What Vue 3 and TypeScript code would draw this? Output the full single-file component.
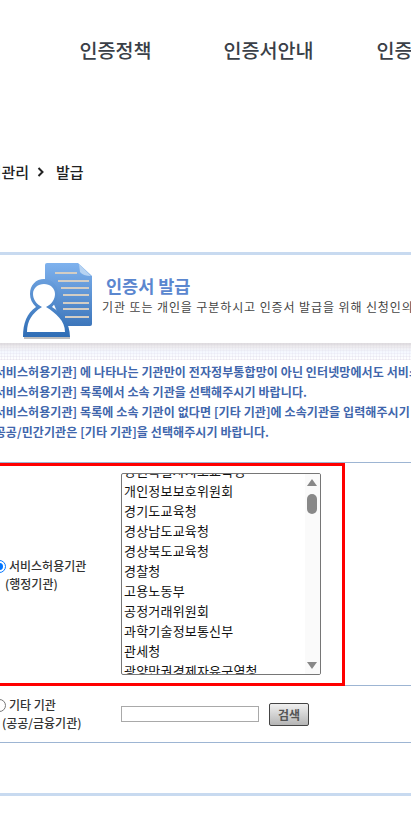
<script setup lang="ts">
const notices = [
  '[서비스허용기관] 에 나타나는 기관만이 전자정부통합망이 아닌 인터넷망에서도 서비스를 이용할 수 있습니다.',
  '[서비스허용기관] 목록에서 소속 기관을 선택해주시기 바랍니다.',
  '[서비스허용기관] 목록에 소속 기관이 없다면 [기타 기관]에 소속기관을 입력해주시기 바랍니다.',
  '(공공/민간기관은 [기타 기관]을 선택해주시기 바랍니다.',
]

const orgs = [
  '강원특별자치도교육청',
  '개인정보보호위원회',
  '경기도교육청',
  '경상남도교육청',
  '경상북도교육청',
  '경찰청',
  '고용노동부',
  '공정거래위원회',
  '과학기술정보통신부',
  '관세청',
  '광양만권경제자유구역청',
]
</script>

<template>
  <div class="page">
    <nav class="gnb">
      <span>인증정책</span>
      <span>인증서안내</span>
      <span>인증서관리</span>
    </nav>

    <div class="crumb">
      <span>인증서관리</span>
      <svg class="chev" width="8" height="10" viewBox="0 0 8 10">
        <path d="M1.5 1 L5.5 5 L1.5 9" fill="none" stroke="#222" stroke-width="2" />
      </svg>
      <span class="crumb-last">발급</span>
    </div>

    <div class="bar"></div>

    <header class="head">
      <svg class="head-icon" width="70" height="77" viewBox="0 0 70 77">
        <defs>
          <linearGradient id="doc" x1="0" y1="0" x2="0" y2="1">
            <stop offset="0" stop-color="#7fb2ee" />
            <stop offset="1" stop-color="#3d76bb" />
          </linearGradient>
          <linearGradient id="man" x1="0" y1="0" x2="0" y2="1">
            <stop offset="0" stop-color="#6a9fdd" />
            <stop offset="1" stop-color="#2f6db5" />
          </linearGradient>
        </defs>
        <path d="M22 2 Q22 0 24 0 H55 L69 13 V61 Q69 63 67 63 H40 L22 20 Z" fill="url(#doc)" />
        <path d="M56 1 L68 13 Q60 13 57 9 Z" fill="#b7d3f2" />
        <g fill="#d3cdc4">
          <rect x="32" y="9" width="22" height="2" />
          <rect x="35" y="17" width="31" height="2" />
          <rect x="38" y="24" width="28" height="2" />
          <rect x="40" y="31" width="26" height="2" />
          <rect x="40" y="39" width="26" height="2" />
          <rect x="40" y="45" width="26" height="2" />
          <rect x="42" y="53" width="24" height="2" />
        </g>
        <path
          d="M0 74 C0 60 4 50 13 44 C9 40 7 36 7 31 C7 22 13 16 21 16 C29 16 35 22 35 31 C35 36 33 40 29 44 C39 50 47 60 47 74 Z"
          fill="url(#man)"
        />
        <path
          d="M4 69 C4 58 9 50 19 44 C13 41 10 36 10 31 C10 25 15 21 21 21 C27 21 32 25 32 31 C32 36 29 41 23 44 C33 50 42 58 42 69 Z"
          fill="#fff"
        />
        <rect x="1" y="74" width="46" height="2" fill="#bdbdbd" />
      </svg>
      <div class="head-text">
        <h2>인증서 발급</h2>
        <p>기관 또는 개인을 구분하시고 인증서 발급을 위해 신청인의 정보를 입력해주시기 바랍니다.</p>
      </div>
    </header>

    <div class="band"></div>

    <ul class="notice">
      <li v-for="line in notices" :key="line">{{ line }}</li>
    </ul>

    <section class="form">
      <div class="row-wrap">
        <div class="row-main">
          <label class="choice">
            <span class="radio on"></span>
            <span class="choice-name">서비스허용기관</span>
            <span class="choice-sub">(행정기관)</span>
          </label>
          <div class="listbox">
            <ul class="items">
              <li v-for="org in orgs" :key="org">{{ org }}</li>
            </ul>
            <div class="scroll">
              <i class="arrow up"></i>
              <i class="thumb"></i>
              <i class="arrow down"></i>
            </div>
          </div>
        </div>
      </div>
      <div class="row-other">
        <label class="choice">
          <span class="radio"></span>
          <span class="choice-name">기타 기관</span>
          <span class="choice-sub">(공공/금융기관)</span>
        </label>
        <input class="org-input" type="text" />
        <button class="search" type="button">검색</button>
      </div>
    </section>

    <div class="bar bottom"></div>
  </div>
</template>

<style scoped>
.page {
  width: 411px;
  height: 824px;
  overflow: hidden;
  background: #fff;
  font-family: "Noto Sans CJK KR", "Noto Sans", sans-serif;
  color: #333;
}
.gnb {
  display: flex;
  padding: 36px 0 0 39px;
  height: 64px;
  font-size: 19.6px;
  line-height: 28px;
  font-weight: 500;
  color: #3a3f47;
  white-space: nowrap;
}
.gnb span {
  flex: none;
  width: 153px;
  text-align: center;
}
.crumb {
  display: flex;
  align-items: center;
  margin: 57px 0 0 -40px;
  height: 28px;
  font-size: 15px;
  font-weight: 500;
  color: #222;
  white-space: nowrap;
}
.chev {
  margin: 2px 0 0 8px;
}
.crumb-last {
  margin-left: 11px;
}
.bar {
  height: 3px;
  margin-top: 67px;
  background: #c8daf0;
}
.head {
  display: flex;
  height: 88px;
  padding-left: 23px;
}
.head-icon {
  flex: none;
  margin-top: 8px;
}
.head-text {
  margin-left: 9px;
  white-space: nowrap;
}
.head-text h2 {
  margin: 19px 0 0 4px;
  font-size: 17.5px;
  line-height: 24px;
  font-weight: 700;
  color: #5b87cf;
}
.head-text p {
  margin: 0;
  font-size: 12px;
  line-height: 18px;
  letter-spacing: 0.9px;
  color: #444;
}
.band {
  height: 17px;
  background-image:
    linear-gradient(#d6d2d6cc 0, #e6e4e8aa 4px, #eef3ff99 9px, #ffffff00 17px),
    radial-gradient(#e8e4ee 45%, transparent 50%);
  background-size: 100% 100%, 3px 3px;
}
.notice {
  list-style: none;
  margin: 2px 0 0 -10px;
  padding: 0;
  font-size: 12px;
  line-height: 20px;
  letter-spacing: 0.1px;
  font-weight: 700;
  color: #4066ac;
  white-space: nowrap;
}
.form {
  margin-top: 20px;
  border-top: 1px solid #9db5d3;
}
.row-wrap {
  height: 222px;
  border-bottom: 1px solid #9db5d3;
}
.row-main {
  display: flex;
  align-items: center;
  position: relative;
  height: 217px;
  width: 359px;
  margin-left: -20px;
  border: 3px solid #f00;
}
.row-other {
  display: flex;
  align-items: center;
  height: 56px;
  border-bottom: 1px solid #9db5d3;
}
.choice {
  position: relative;
  display: block;
  flex: none;
  width: 121px;
  padding-left: 9px;
  box-sizing: border-box;
  font-size: 12px;
  line-height: 18px;
  font-weight: 500;
}
.row-main .choice {
  width: 138px;
  padding-left: 26px;
}
.choice-name,
.choice-sub {
  display: block;
  white-space: nowrap;
}
.choice-sub {
  margin-left: -7px;
}
.row-main .choice-sub {
  margin-left: -4px;
}
.radio {
  position: absolute;
  left: -7px;
  top: 3px;
  width: 13px;
  height: 13px;
  border: 1px solid #777;
  border-radius: 50%;
  background: #fff;
  box-sizing: border-box;
}
.row-main .radio {
  left: 10px;
}
.radio.on {
  border-color: #0075ff;
}
.radio.on::after {
  content: "";
  position: absolute;
  inset: 2px;
  border-radius: 50%;
  background: #0075ff;
}
.listbox {
  display: flex;
  align-self: flex-start;
  width: 200px;
  height: 202px;
  margin-top: 7px;
  border: 1px solid #767676;
  border-radius: 2px;
  box-sizing: border-box;
  overflow: hidden;
}
.items {
  flex: 1;
  list-style: none;
  margin: -13px 0 0;
  padding: 0 0 0 2px;
  font-size: 13px;
  line-height: 20px;
  letter-spacing: 0.2px;
  color: #111;
  white-space: nowrap;
  overflow: hidden;
}
.scroll {
  position: relative;
  flex: none;
  width: 15px;
  background: #fafafa;
}
.arrow {
  position: absolute;
  left: 2px;
  width: 0;
  height: 0;
  border-left: 5px solid transparent;
  border-right: 5px solid transparent;
}
.arrow.up {
  top: 5px;
  border-bottom: 7px solid #888;
}
.arrow.down {
  bottom: 5px;
  border-top: 7px solid #888;
}
.thumb {
  position: absolute;
  left: 2px;
  top: 20px;
  width: 10px;
  height: 20px;
  border-radius: 5px;
  background: #888;
}
.org-input {
  width: 138px;
  height: 16px;
  padding: 0;
  border: 1px solid #a9a9a9;
  box-sizing: border-box;
  background: #fff;
}
.search {
  width: 40px;
  height: 23px;
  margin-left: 10px;
  padding: 0;
  border: 1px solid #444;
  border-radius: 2px;
  background: linear-gradient(#f0f0f0, #b5b5b5);
  font-family: inherit;
  font-size: 12px;
  font-weight: 700;
  color: #555;
}
.bar.bottom {
  margin-top: 50px;
}
</style>
